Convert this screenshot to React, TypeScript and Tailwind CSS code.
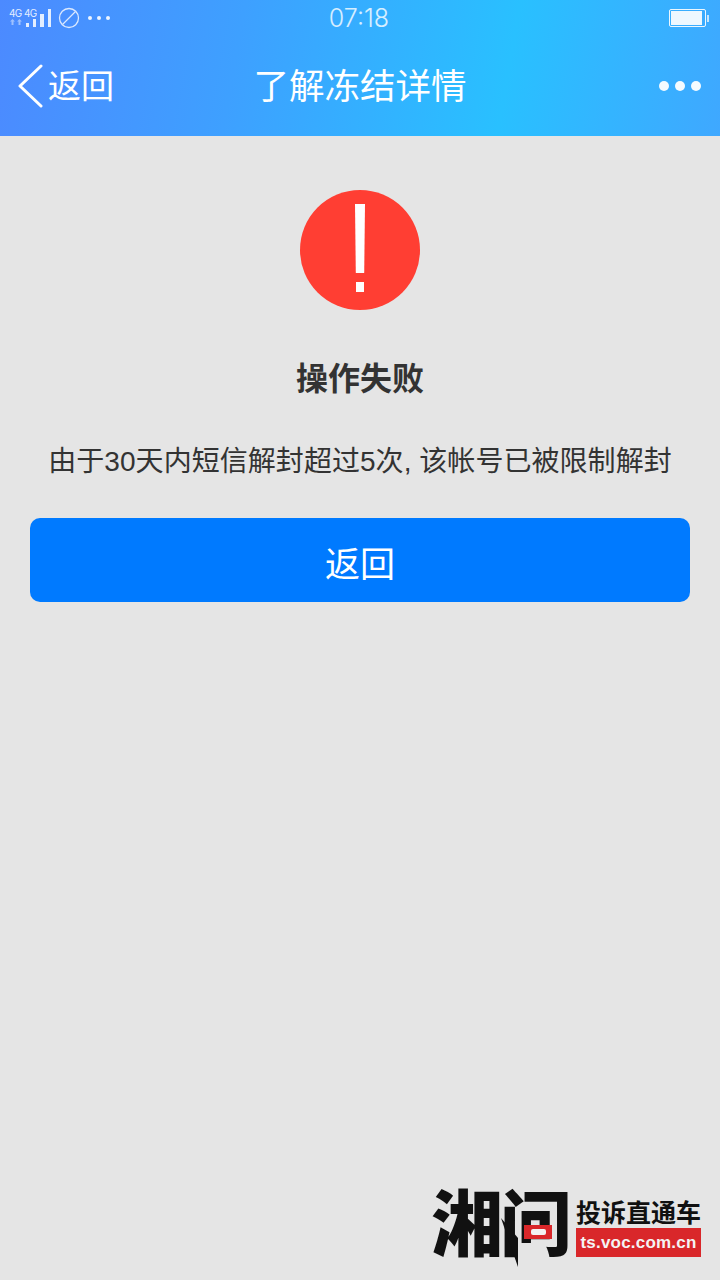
const cjk = "font-['Liberation_Sans','Noto_Sans_CJK_SC',sans-serif]";

function StatusBar() {
  return (
    <div className="flex h-9 items-center justify-between text-white">
      <div className="flex items-center pl-[9px]">
        <div className="relative h-[18px] w-[42px]">
          <span className="absolute left-0 -top-[2px] font-['Inter',sans-serif] text-[10px] leading-[12px] tracking-[-0.6px] whitespace-nowrap opacity-85">4G 4G</span>
          <svg width="42" height="18" viewBox="0 0 42 18" className="absolute left-0 top-0 opacity-85" fill="#fff">
            <path d="M3.5 10 1 12.5h1.5V16h2v-3.5H6zM10.5 10 8 12.5h1.5V16h2v-3.5H13z" opacity=".55" />
            <rect x="17" y="14" width="3" height="4" />
            <rect x="24" y="10" width="3" height="8" />
            <rect x="31" y="5" width="4" height="13" />
            <rect x="39" y="0" width="3" height="18" />
          </svg>
        </div>
        <svg width="22" height="22" viewBox="0 0 22 22" className="ml-[7px] opacity-80" fill="none" stroke="#fff" strokeWidth="1.3">
          <circle cx="11" cy="11" r="9.5" />
          <path d="M4.5 17.5 17.5 4.5" />
        </svg>
        <div className="ml-[8px] flex gap-[5px]">
          <span className="size-[4px] rounded-full bg-white opacity-90" />
          <span className="size-[4px] rounded-full bg-white opacity-90" />
          <span className="size-[4px] rounded-full bg-white opacity-90" />
        </div>
      </div>
      <span className="absolute left-0 top-[3px] w-[718px] text-center font-['Inter',sans-serif] text-[25px] leading-[30px] font-light text-white/80">07:18</span>
      <div className="flex items-center pr-[11px]">
        <div className="flex h-[18px] w-[37px] items-stretch rounded-[2px] border border-white/90 p-[1px]">
          <div className="w-[31px] bg-[#eef8ff]" />
        </div>
        <div className="ml-[1px] h-[7px] w-[2px] bg-white/70" />
      </div>
    </div>
  );
}

function NavBar() {
  return (
    <div className="relative flex h-[100px] items-center justify-between">
      <div className="flex items-center pl-[17px]">
        <svg width="26" height="44" viewBox="0 0 26 44" fill="none" stroke="#fff" strokeWidth="3" strokeLinecap="round" strokeLinejoin="round">
          <path d="M24 2 3 22l21 20" />
        </svg>
        <span className={`${cjk} ml-[5px] pt-[1px] text-[33px] leading-[44px] text-white`}>返回</span>
      </div>
      <span className={`${cjk} absolute inset-x-0 pt-[2px] text-center text-[35.5px] leading-[44px] text-white`}>了解冻结详情</span>
      <div className="flex gap-[6px] pr-[19px]">
        <span className="size-[10px] rounded-full bg-white/95" />
        <span className="size-[10px] rounded-full bg-white/95" />
        <span className="size-[10px] rounded-full bg-white/95" />
      </div>
    </div>
  );
}

function Logo() {
  return (
    <div className="flex items-start pr-[19px] pb-[12px]">
      <div className="relative h-[82px] w-[145px]">
        <span className={`${cjk} absolute left-0 top-[3px] text-[72px] leading-[72px] font-black tracking-[-3px] whitespace-nowrap text-[#111]`}>
          湘问
        </span>
        <svg width="40" height="50" viewBox="0 0 40 50" className="absolute left-[70px] top-[32px]" fill="#111">
          <path d="M0 0 17 49V20z" />
        </svg>
        <div className="absolute left-[93px] top-[39px] flex h-[14px] w-[28px] items-center justify-center bg-[#d9272a]">
          <div className="h-[6px] w-[15px] rounded-[2px] bg-[#f2f2f2]" />
        </div>
      </div>
      <div className="mt-[12px] flex w-[125px] flex-col items-stretch">
        <span className={`${cjk} text-center text-[25px] leading-[30px] font-bold whitespace-nowrap text-[#111]`}>投诉直通车</span>
        <span className="bg-[#d9272a] text-center font-['Liberation_Sans',sans-serif] text-[17px] leading-[29px] font-bold tracking-[0.2px] whitespace-nowrap text-[#f4f4f4]">ts.voc.com.cn</span>
      </div>
    </div>
  );
}

export default function App() {
  return (
    <div className="relative flex h-[1280px] w-[720px] flex-col overflow-hidden bg-[#e5e5e5]">
      <div className="bg-[linear-gradient(100deg,#4c8aff_0%,#3ea0ff_33%,#29c0ff_70%,#3fa8ff_100%)]">
        <StatusBar />
        <NavBar />
      </div>
      <div className="flex flex-1 flex-col items-center">
        <div className="mt-[54px] flex size-[120px] flex-col items-center rounded-full bg-[#ff3e33] pt-[14px]">
          <div className="h-[69px] w-[10px] bg-white [clip-path:polygon(0_0,100%_0,92%_100%,8%_100%)]" />
          <div className="mt-[9px] h-[10px] w-[8px] bg-white" />
        </div>
        <h1 className={`${cjk} mt-[49px] text-[32px] leading-[40px] font-bold text-[#333]`}>操作失败</h1>
        <p className={`${cjk} mt-[46px] text-[28px] leading-[34px] tracking-[0.05px] whitespace-nowrap text-[#333]`}>由于30天内短信解封超过5次, 该帐号已被限制解封</p>
        <button className={`${cjk} mt-[39px] h-[84px] w-[660px] rounded-[10px] bg-[#007aff] pt-[10px] text-[35px] text-white`}>返回</button>
        <div className="mt-auto self-end">
          <Logo />
        </div>
      </div>
    </div>
  );
}
